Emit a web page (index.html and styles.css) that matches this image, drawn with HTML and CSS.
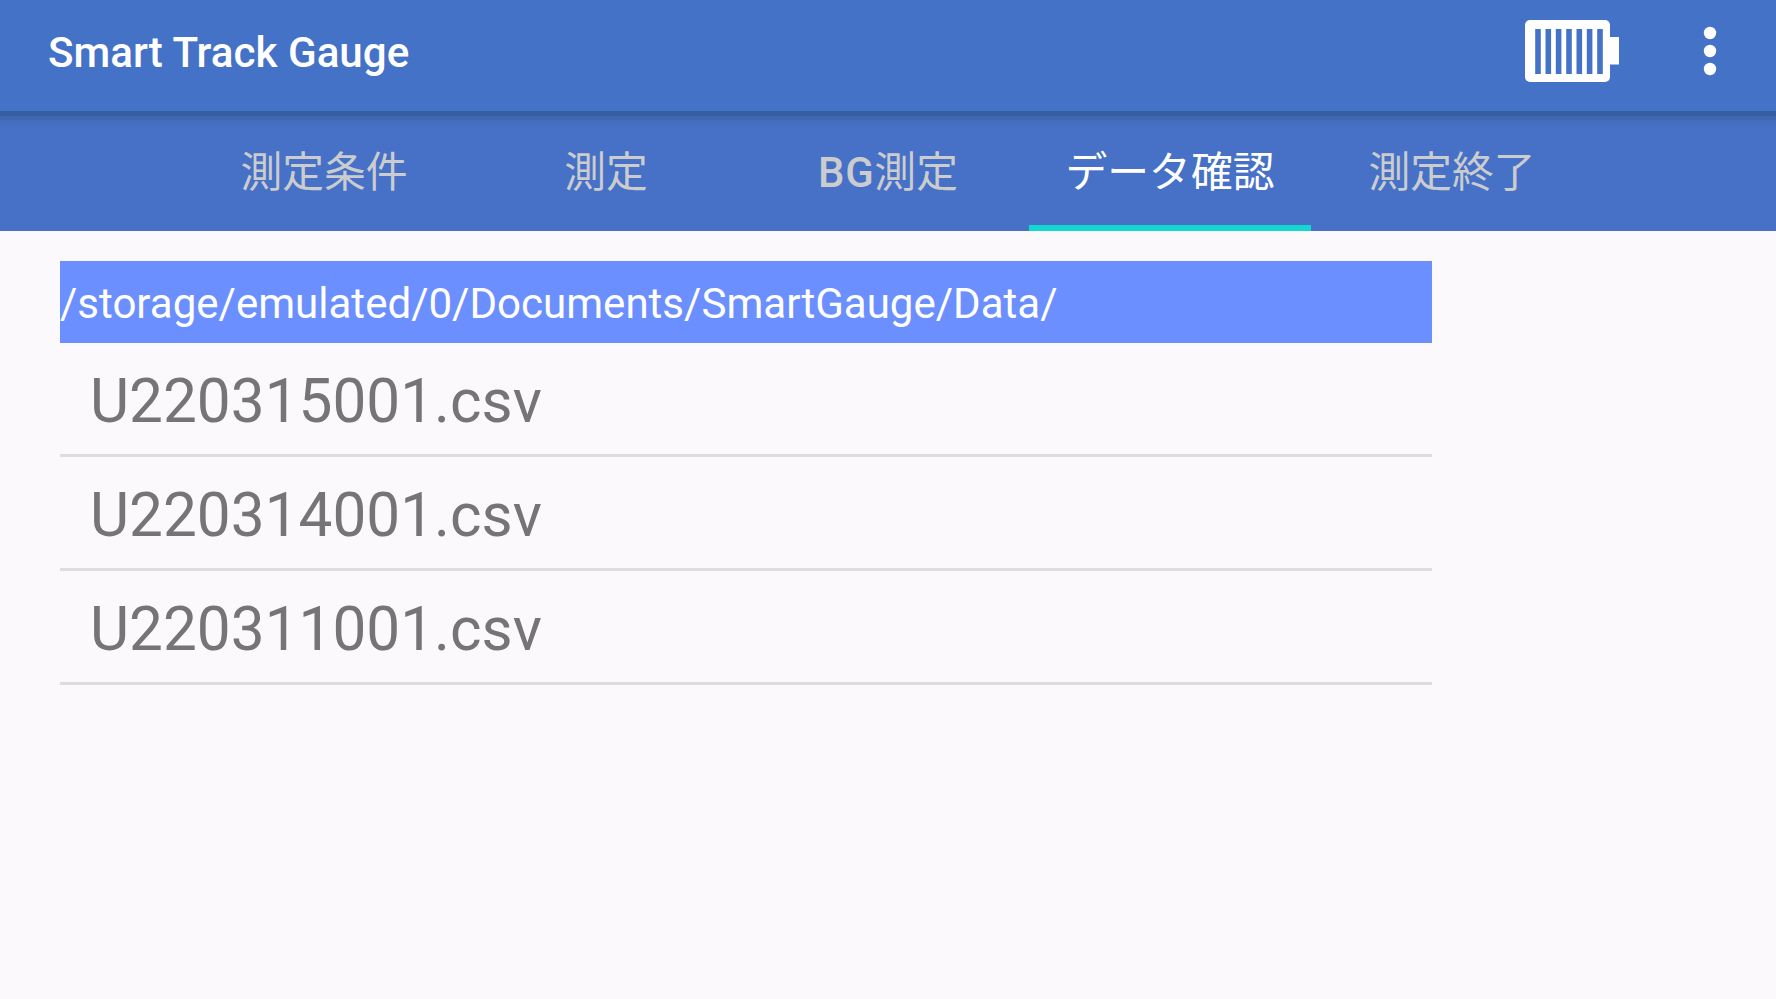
FILE: index.html
```
<!DOCTYPE html>
<html lang="ja">
<head>
    <meta charset="UTF-8">
    <meta name="viewport" content="width=device-width, initial-scale=1.0">
    <title>Smart Track Gauge</title>
    <link rel="stylesheet" href="styles.css">
</head>
<body>

<!-- App bar -->
<header class="app-bar">
    <h1 class="title">Smart Track Gauge</h1>
    <svg class="battery" width="94" height="62" viewBox="0 0 94 62">
        <rect x="0" y="0" width="85" height="62" rx="5" fill="#fff"/>
        <rect x="84" y="17" width="10" height="27.5" fill="#fff"/>
        <path d="M13 9v45M23.3 9v45M33.6 9v45M44 9v45M54.3 9v45M64.6 9v45M75 9v45" stroke="#4472c7" stroke-width="5.6"/>
    </svg>
    <svg class="menu" width="12" height="48" viewBox="0 0 12 48">
        <circle cx="6" cy="6" r="6.2" fill="#fff"/>
        <circle cx="6" cy="24" r="6.2" fill="#fff"/>
        <circle cx="6" cy="42" r="6.2" fill="#fff"/>
    </svg>
</header>

<!-- Tabs -->
<nav class="tabs">
    <a class="tab">測定条件</a>
    <a class="tab">測定</a>
    <a class="tab"><span class="latin">BG</span>測定</a>
    <a class="tab active">データ確認</a>
    <a class="tab">測定終了</a>
</nav>

<!-- File list -->
<main class="content">
    <div class="path">/storage/emulated/0/Documents/SmartGauge/Data/</div>
    <ul class="file-list">
        <li>U220315001.csv</li>
        <li>U220314001.csv</li>
        <li>U220311001.csv</li>
    </ul>
</main>

</body>
</html>
```

FILE: styles.css
```
* {
    box-sizing: border-box;
}
body {
    margin: 0;
    height: 100vh;
    overflow: hidden;
    background: #fbf9fc;
    font-family: Roboto, "Noto Sans CJK JP", sans-serif;
}

/* App bar */
.app-bar {
    display: flex;
    align-items: flex-start;
    height: 111px;
    padding: 0 60px 0 48px;
    background: #4472c7;
    color: #fff;
}
.title {
    margin: 28px auto 0 0;
    font-size: 42.15px;
    line-height: 49px;
    font-weight: 500;
}
.battery {
    margin-top: 20px;
}
.menu {
    margin: 27px 0 0 85px;
    overflow: visible;
}

/* Tabs */
.tabs {
    display: flex;
    justify-content: center;
    height: 120px;
    background: linear-gradient(#355fa3 0, #355fa3 5px, #3e67ad 5px, #3e67ad 8px, #446fc0 10px, #4671c6 18px);
}
.tab {
    display: flex;
    align-items: center;
    justify-content: center;
    width: 282px;
    padding-top: 9px;
    border-bottom: 6px solid transparent;
    color: #cbccce;
    font-size: 41.8px;
    line-height: 60px;
    font-weight: 400;
}
.tab.active {
    color: #fff;
    border-bottom-color: #12d8cf;
}
.latin {
    font-weight: 500;
    letter-spacing: 0.7px;
}

/* File list */
.content {
    width: 1372px;
    margin: 30px 0 0 60px;
}
.path {
    height: 82px;
    background: #6b8fff;
    color: #fff;
    font-size: 42.05px;
    line-height: 86px;
}
.file-list {
    margin: 0;
    padding: 0;
    list-style: none;
}
.file-list li {
    height: 114px;
    padding-left: 30px;
    border-bottom: 3px solid #dedce0;
    color: #757477;
    font-size: 60.3px;
    line-height: 118px;
}
```
